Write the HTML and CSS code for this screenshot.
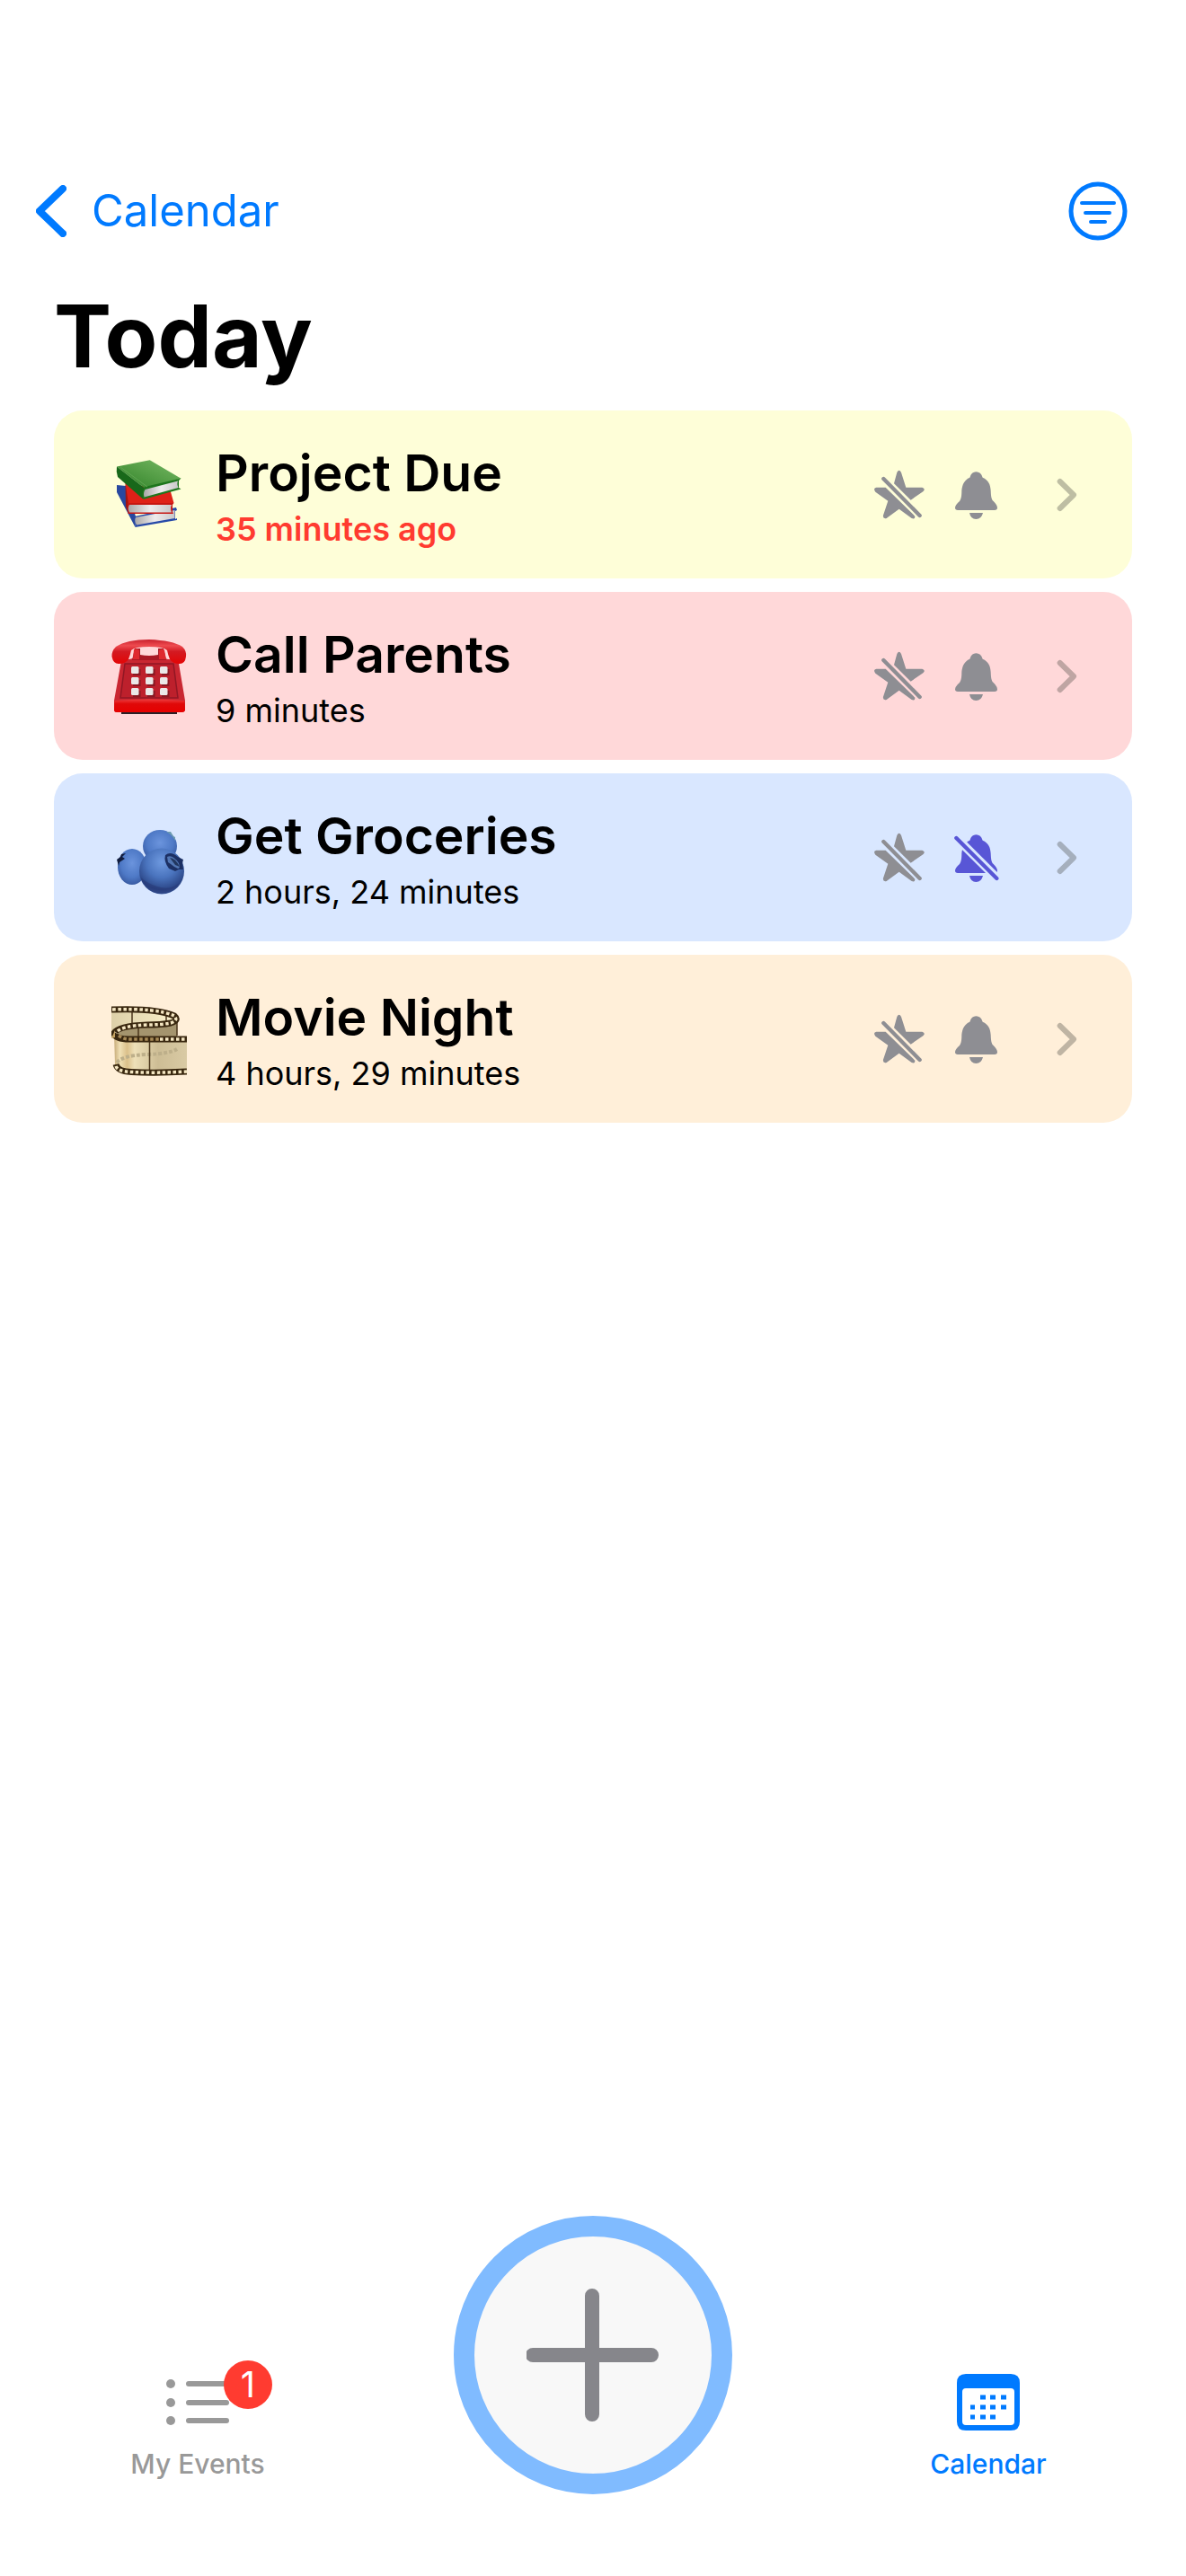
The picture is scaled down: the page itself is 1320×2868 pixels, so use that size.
FILE: index.html
```html
<!DOCTYPE html>
<html lang="en">
<head>
<meta charset="utf-8">
<meta name="viewport" content="width=device-width, initial-scale=1">
<title>Today</title>
<link rel="stylesheet" href="styles.css">
</head>
<body>
<svg class="defs" aria-hidden="true">
  <defs>
    <symbol id="star-slash" viewBox="96 216 174 168">
      <path d="M165 262 L175 225Q182 212 189 225L205 275H259Q272 280 262 289L221 317Z"/>
      <path d="M137 275L235 371Q236 383 224 378L182 347L140 378Q127 381 129 368L145 320L103 290Q94 277 106 275Z"/>
      <path d="M130 246L251 369" stroke="currentColor" stroke-width="13" stroke-linecap="round"/>
    </symbol>
    <path id="bell-shape" d="M418 242Q424 223 439 223Q455 223 461 242C480 250 487 265 488 285C489 305 490 315 497 321Q510 334 510 343Q510 351 501 351H378Q369 351 369 343Q369 334 384 321C390 314 391 300 391 285C393 265 400 250 418 242ZM417 360H462Q457 381 439 381Q421 381 417 360Z"/>
    <symbol id="bell" viewBox="366 216 150 168"><use href="#bell-shape"/></symbol>
    <mask id="bell-cut" maskUnits="userSpaceOnUse" x="360" y="210" width="160" height="180">
      <rect x="360" y="210" width="160" height="180" fill="#fff"/>
      <path d="M354 214L530 389" stroke="#000" stroke-width="29"/>
    </mask>
    <symbol id="bell-slash" viewBox="366 216 150 168">
      <g mask="url(#bell-cut)"><use href="#bell-shape"/></g>
      <path d="M373 234L508 369" stroke="currentColor" stroke-width="13" stroke-linecap="round"/>
    </symbol>
    <symbol id="chevron" viewBox="708 240 72 120">
      <path d="M719 255L765 300L719 345" fill="none" stroke="currentColor" stroke-width="18" stroke-linecap="round" stroke-linejoin="round"/>
    </symbol>
    <linearGradient id="green" x1="0" y1="1" x2="1" y2="0"><stop offset="0" stop-color="#2f8127"/><stop offset="1" stop-color="#79ba65"/></linearGradient>
    <linearGradient id="page" x1="0" x2="1"><stop offset="0" stop-color="#a9a7a8"/><stop offset=".5" stop-color="#eeeced"/><stop offset="1" stop-color="#c9c7c8"/></linearGradient>
    <linearGradient id="handset" x1="0" y1="0" x2="0" y2="1"><stop offset="0" stop-color="#c9202c"/><stop offset=".25" stop-color="#ee4b50"/><stop offset=".5" stop-color="#d31a22"/><stop offset="1" stop-color="#e30505"/></linearGradient>
    <linearGradient id="base" x1="0" y1="0" x2="0" y2="1"><stop offset="0" stop-color="#ee3d3f"/><stop offset=".35" stop-color="#e00909"/><stop offset="1" stop-color="#e60000"/></linearGradient>
    <radialGradient id="berry" cx=".5" cy=".3" r=".75"><stop offset="0" stop-color="#6f9ae0"/><stop offset=".45" stop-color="#4a74be"/><stop offset=".8" stop-color="#2c4788"/><stop offset="1" stop-color="#4468ac"/></radialGradient>
    <radialGradient id="berry-light" cx=".5" cy=".4" r=".65"><stop offset="0" stop-color="#6b94dd"/><stop offset=".6" stop-color="#4e79c6"/><stop offset="1" stop-color="#34549b"/></radialGradient>
    <linearGradient id="film-front" x1="0" x2="1"><stop offset="0" stop-color="#c7ac79"/><stop offset=".08" stop-color="#f0e0b5"/><stop offset=".18" stop-color="#dbc08a"/><stop offset=".28" stop-color="#eee0b8"/><stop offset=".6" stop-color="#cdbd95"/><stop offset="1" stop-color="#d9caa4"/></linearGradient>
    <linearGradient id="film-back" x1="0" x2="1"><stop offset="0" stop-color="#ddd0a9"/><stop offset=".7" stop-color="#f1e6bf"/><stop offset=".9" stop-color="#fbf2cf"/><stop offset="1" stop-color="#b58d45"/></linearGradient>
  </defs>
</svg>

<header class="top-bar">
  <a class="back" href="#">
    <svg class="back-icon" viewBox="0 0 34 58" aria-hidden="true"><path d="M30 4L4 29L30 54" fill="none" stroke="currentColor" stroke-width="8" stroke-linecap="round" stroke-linejoin="round"/></svg>
    Calendar
  </a>
  <button class="filter" type="button" aria-label="Filter events">
    <svg viewBox="0 0 66 66" aria-hidden="true"><g fill="none" stroke="currentColor" stroke-linecap="round"><circle cx="33" cy="33" r="30" stroke-width="5"/><path d="M15 24H51M19 35H46M25 45H41" stroke-width="4"/></g></svg>
  </button>
</header>

<main class="content">
  <h1 class="page-title">Today</h1>
  <ul class="events">
    <li class="event event-yellow">
      <a class="event-link" href="#">
        <svg class="emoji" viewBox="0 0 84 84" aria-hidden="true">
          <path d="M6 31L16 32L27 66L26.500 78L6 39Z" fill="#28489f"/>
          <path d="M26 66L72 56L73 59L71 60V69L73 68V70L26.500 78Z" fill="#2649a8"/>
          <path d="M27 67L70.500 59V68L28 75.500Q25 71 27 67Z" fill="url(#page)"/>
          <path d="M15.500 29L65.500 37L69.500 51L19 53L18.500 62Z" fill="#df2118"/>
          <path d="M15.500 29L19 52L18.500 62L16 55Z" fill="#9e1712"/>
          <path d="M18 51H69.500L68 53V61L69 63H18.500Z" fill="#c71612"/>
          <path d="M20 53H67Q65 57 67 61.500H20Q17.500 57 20 53Z" fill="url(#page)"/>
          <path d="M6 10.500L42.700 3.200L77.500 23.800L37 34.500Z" fill="url(#green)"/>
          <path d="M6 10.500L37 34.500L35 46.500L7 22Q5 16 6 10.500Z" fill="#18681a"/>
          <path d="M37 33L77.500 23.500L75 26V34L77.500 35.500L35.500 47Q33 40 37 33Z" fill="#1e761d"/>
          <path d="M37.500 36L74 26.500Q72.500 30 74.500 34L36.500 44.500Q35 40 37.500 36Z" fill="url(#page)"/>
          <path d="M10 11L40 33" stroke="#5fa451" stroke-width="1"/>
        </svg>
        <span class="event-text">
          <span class="event-name">Project Due</span>
          <span class="event-time overdue">35 minutes ago</span>
        </span>
      </a>
      <button class="icon-button" type="button" aria-label="Favorite"><svg class="star" aria-hidden="true"><use href="#star-slash"/></svg></button>
      <button class="icon-button" type="button" aria-label="Notifications on"><svg class="bell" aria-hidden="true"><use href="#bell"/></svg></button>
      <a class="disclosure" href="#" aria-label="Open Project Due"><svg class="chevron" aria-hidden="true"><use href="#chevron"/></svg></a>
    </li>
    <li class="event event-red">
      <a class="event-link" href="#">
        <svg class="emoji" viewBox="0 0 84 84" aria-hidden="true">
          <path d="M11 81H73V84H11Z" fill="#282026"/>
          <path d="M11 25Q12 23 20 23L31 20H53L63 23Q73 23 74.500 25L82 69V79Q82 82 78 82H6Q3 82 3 79V69Z" fill="#c92732"/>
          <path d="M3.500 69Q42 66 81.500 69L82 79Q82 82 78 82H6Q3 82 3 79Z" fill="url(#base)"/>
          <path d="M15 28H69L74 66H10Z" fill="#bd202c" stroke="#911724" stroke-width="1.500"/>
          <path d="M26 11H32V18Q42 20 52 18V11H58L61 24H23Z" fill="#a91824"/>
          <path d="M42 1Q68 2 79 9Q84 14 83 20Q82 28 76 28Q68 28 65 23Q63 18 62 13Q58 9 42 9Q26 9 22 13Q21 18 19 23Q16 28 8 28Q2 28 .500 20Q0 14 5 9Q17 1 42 1Z" fill="url(#handset)"/>
          <path d="M25 12Q29 10 31 13V23H24ZM53 13Q57 10 59 13L61 23H53Z" fill="#df292f"/>
          <path d="M24 34h8.500v7H24zM40 34h8.500v7H40zM56 34h8.500v7H56zM24 46h8.500v7H24zM40 46h8.500v7H40zM56 46h8.500v7H56zM24 58h8.500v7H24zM40 58h8.500v7H40zM56 58h8.500v7H56z" fill="#731720" opacity=".7"/>
          <g fill="#ebe8e8"><rect x="22" y="31" width="8.500" height="8" rx="1.500"/><rect x="38" y="31" width="8.500" height="8" rx="1.500"/><rect x="54" y="31" width="8.500" height="8" rx="1.500"/><rect x="22" y="43" width="8.500" height="8" rx="1.500"/><rect x="38" y="43" width="8.500" height="8" rx="1.500"/><rect x="54" y="43" width="8.500" height="8" rx="1.500"/><rect x="22" y="55" width="8.500" height="8" rx="1.500"/><rect x="38" y="55" width="8.500" height="8" rx="1.500"/><rect x="54" y="55" width="8.500" height="8" rx="1.500"/></g>
        </svg>
        <span class="event-text">
          <span class="event-name">Call Parents</span>
          <span class="event-time">9 minutes</span>
        </span>
      </a>
      <button class="icon-button" type="button" aria-label="Favorite"><svg class="star" aria-hidden="true"><use href="#star-slash"/></svg></button>
      <button class="icon-button" type="button" aria-label="Notifications on"><svg class="bell" aria-hidden="true"><use href="#bell"/></svg></button>
      <a class="disclosure" href="#" aria-label="Open Call Parents"><svg class="chevron" aria-hidden="true"><use href="#chevron"/></svg></a>
    </li>
    <li class="event event-blue">
      <a class="event-link" href="#">
        <svg class="emoji" viewBox="0 0 84 84" aria-hidden="true">
          <ellipse cx="54" cy="29" rx="19" ry="18" fill="url(#berry-light)"/>
          <path d="M61 13L66 13L69 18L71 19V23Q67 16 61 13Z" fill="#6c9bb0"/>
          <ellipse cx="23" cy="52" rx="16" ry="20" fill="url(#berry-light)"/>
          <path d="M6 44L10 41L11 38L16 37L12 41L15 43L12 45L9 47L8 51Z" fill="#111c3d"/>
          <ellipse cx="56" cy="57" rx="25" ry="25.500" fill="url(#berry)"/>
          <path d="M33 64Q38 80 54 82Q70 82 76 70Q65 79 51 74Q39 70 33 64Z" fill="#26336f" opacity=".45"/>
          <path d="M60 39Q66 34 74 41L80 44L79 48L80 55L75 55L71 57L64 54Q58 46 60 39Z" fill="#1c3064"/>
          <path d="M62 41Q68 38 75 48Q77 54 74 54L70 52L66 49L63 47Z" fill="#5277b4"/>
          <path d="M65 42Q71 42 76 52L71 50Z" fill="#22375f"/>
        </svg>
        <span class="event-text">
          <span class="event-name">Get Groceries</span>
          <span class="event-time">2 hours, 24 minutes</span>
        </span>
      </a>
      <button class="icon-button" type="button" aria-label="Favorite"><svg class="star" aria-hidden="true"><use href="#star-slash"/></svg></button>
      <button class="icon-button muted" type="button" aria-label="Notifications off"><svg class="bell" aria-hidden="true"><use href="#bell-slash"/></svg></button>
      <a class="disclosure" href="#" aria-label="Open Get Groceries"><svg class="chevron" aria-hidden="true"><use href="#chevron"/></svg></a>
    </li>
    <li class="event event-orange">
      <a class="event-link" href="#">
        <svg class="emoji" viewBox="0 0 84 84" aria-hidden="true">
          <path d="M0 8Q50 6 73 15V60L30 62L0 40Z" fill="url(#film-back)"/>
          <path d="M6 36Q20 25 73 22V40H8Z" fill="#a4946e"/>
          <path d="M3 36Q5 42 20 42H84V78Q40 81 14 79Q4 78 4 70Z" fill="url(#film-front)"/>
          <path d="M6 68Q12 60 40 59Q65 58 73 53" fill="none" stroke="#bdaf8a" stroke-width="4" stroke-dasharray="4 2"/>
          <path d="M23 11V27M61 13V24M30 28V39M42.500 45V76M73 15V38" stroke="#49351b" stroke-width="1.500"/>
          <g fill="none" stroke="#39270f" stroke-width="7">
            <path d="M0 9Q50 7 70 16Q76 21 66 24Q55 26 40 26Q8 27 3 35Q4 42 20 42H84"/>
            <path d="M5 70Q7 78 22 78.500Q50 80 84 78"/>
          </g>
          <path d="M0 41L4 32L4 40Z" fill="#c5a260"/>
          <g fill="none" stroke="#f5e7c3" stroke-width="3.500" stroke-dasharray="3.500 2.500">
            <path d="M1 9Q50 7 70 16Q75 21 66 24Q55 26 40 26Q10 27 5 35"/>
            <path d="M54 42H84"/>
            <path d="M5 72Q7 78 22 78.500Q50 80 84 78"/>
          </g>
          <path d="M8 38Q14 42 20 42H54" fill="none" stroke="#a88b58" stroke-width="3.500" stroke-dasharray="3.500 2.500"/>
        </svg>
        <span class="event-text">
          <span class="event-name">Movie Night</span>
          <span class="event-time">4 hours, 29 minutes</span>
        </span>
      </a>
      <button class="icon-button" type="button" aria-label="Favorite"><svg class="star" aria-hidden="true"><use href="#star-slash"/></svg></button>
      <button class="icon-button" type="button" aria-label="Notifications on"><svg class="bell" aria-hidden="true"><use href="#bell"/></svg></button>
      <a class="disclosure" href="#" aria-label="Open Movie Night"><svg class="chevron" aria-hidden="true"><use href="#chevron"/></svg></a>
    </li>
  </ul>
</main>

<nav class="tab-bar" aria-label="Main">
  <a class="tab" href="#">
    <span class="tab-icon">
      <svg viewBox="0 0 70 64" aria-hidden="true"><g fill="currentColor"><circle cx="5" cy="11" r="5"/><circle cx="5" cy="32" r="5"/><circle cx="5" cy="52" r="5"/></g><path d="M25 11H67M25 32H67M25 52H67" stroke="currentColor" stroke-width="6" stroke-linecap="round"/></svg>
      <span class="badge">1</span>
    </span>
    My Events
  </a>
  <button class="add" type="button" aria-label="Add event">
    <svg viewBox="0 0 148 148" aria-hidden="true"><path d="M73 8V140M7 74H139" stroke="currentColor" stroke-width="16" stroke-linecap="round"/></svg>
  </button>
  <a class="tab active" href="#" aria-current="page">
    <span class="tab-icon">
      <svg viewBox="0 0 70 64" aria-hidden="true"><path fill="currentColor" fill-rule="evenodd" d="M10 0H60Q70 0 70 10V53Q70 63 60 63H10Q0 63 0 53V10Q0 0 10 0ZM10 16Q6 16 6 20V53Q6 57 10 57H60Q64 57 64 53V20Q64 16 60 16Z"/><path d="M26 26h6M37 26h6M49 26h6M15 37h5M26 37h6M37 37h6M49 37h6M15 48h5M26 48h6M37 48h6" stroke="currentColor" stroke-width="5"/></svg>
    </span>
    Calendar
  </a>
</nav>
</body>
</html>
```
FILE: styles.css
```css
* {
  box-sizing: border-box;
}

body {
  display: flex;
  flex-direction: column;
  min-height: 100vh;
  margin: 0;
  background: #fff;
  color: #000;
  font-family: Inter, "Liberation Sans", sans-serif;
}

a {
  color: inherit;
  text-decoration: none;
}

button {
  display: flex;
  padding: 0;
  border: 0;
  background: none;
  color: inherit;
}

svg {
  display: block;
  fill: currentColor;
}

.defs {
  position: absolute;
  width: 0;
  height: 0;
}

.top-bar {
  display: flex;
  justify-content: space-between;
  align-items: center;
  padding: 202px 65px 0 40px;
  color: #007aff;
}

.back {
  display: flex;
  align-items: center;
  gap: 28px;
  font-size: 49px;
  line-height: 66px;
}

.back-icon {
  width: 34px;
  height: 58px;
}

.filter svg {
  width: 66px;
  height: 66px;
}

.content {
  padding: 46px 60px 60px;
}

.page-title {
  margin: 0;
  font-size: 96px;
  line-height: 120px;
  font-weight: 700;
}

.events {
  display: flex;
  flex-direction: column;
  gap: 15px;
  margin: 23px 0 0;
  padding: 0;
  list-style: none;
}

.event {
  display: flex;
  align-items: center;
  padding: 31px 60px 31px 64px;
  border-radius: 32px;
  color: #8e8e93;
}

.event-yellow { background: #fefed8; }
.event-red { background: #ffd8d9; }
.event-blue { background: #d9e7ff; }
.event-orange { background: #ffefd9; }

.event-link {
  display: flex;
  flex: 1;
  align-items: center;
  gap: 32px;
  color: #000;
}

.emoji {
  width: 84px;
  height: 84px;
}

.event-text {
  display: flex;
  flex-direction: column;
}

.event-name {
  font-size: 57px;
  line-height: 77px;
  font-weight: 600;
}

.event-time {
  font-size: 36px;
  line-height: 48px;
}

.overdue {
  color: #ff3b30;
  font-weight: 600;
}

.icon-button {
  margin-right: 32px;
}

.muted {
  color: #5856d6;
}

.star {
  width: 58px;
  height: 56px;
}

.bell {
  width: 50px;
  height: 56px;
}

.disclosure {
  margin-left: 32px;
  color: rgba(60, 60, 55, 0.33);
}

.chevron {
  width: 24px;
  height: 40px;
}

.tab-bar {
  display: grid;
  grid-template-columns: repeat(3, 1fr);
  align-items: end;
  justify-items: center;
  margin-top: auto;
  padding-bottom: 91px;
}

.tab {
  display: flex;
  flex-direction: column;
  align-items: center;
  gap: 15px;
  padding-bottom: 12px;
  color: #999;
  font-size: 30px;
  line-height: 43px;
  font-weight: 500;
}

.active {
  color: #007aff;
}

.tab-icon {
  position: relative;
}

.tab-icon svg {
  width: 70px;
  height: 64px;
}

.badge {
  position: absolute;
  top: -15px;
  left: 64px;
  width: 54px;
  border-radius: 50%;
  background: #ff3b30;
  color: #fff;
  font-size: 40px;
  line-height: 54px;
  font-weight: 400;
  text-align: center;
}

.add {
  align-items: center;
  justify-content: center;
  width: 310px;
  height: 310px;
  border: 23px solid #80bbff;
  border-radius: 50%;
  background: #f8f8f8;
  color: #86868b;
}

.add svg {
  width: 148px;
  height: 148px;
}
```
